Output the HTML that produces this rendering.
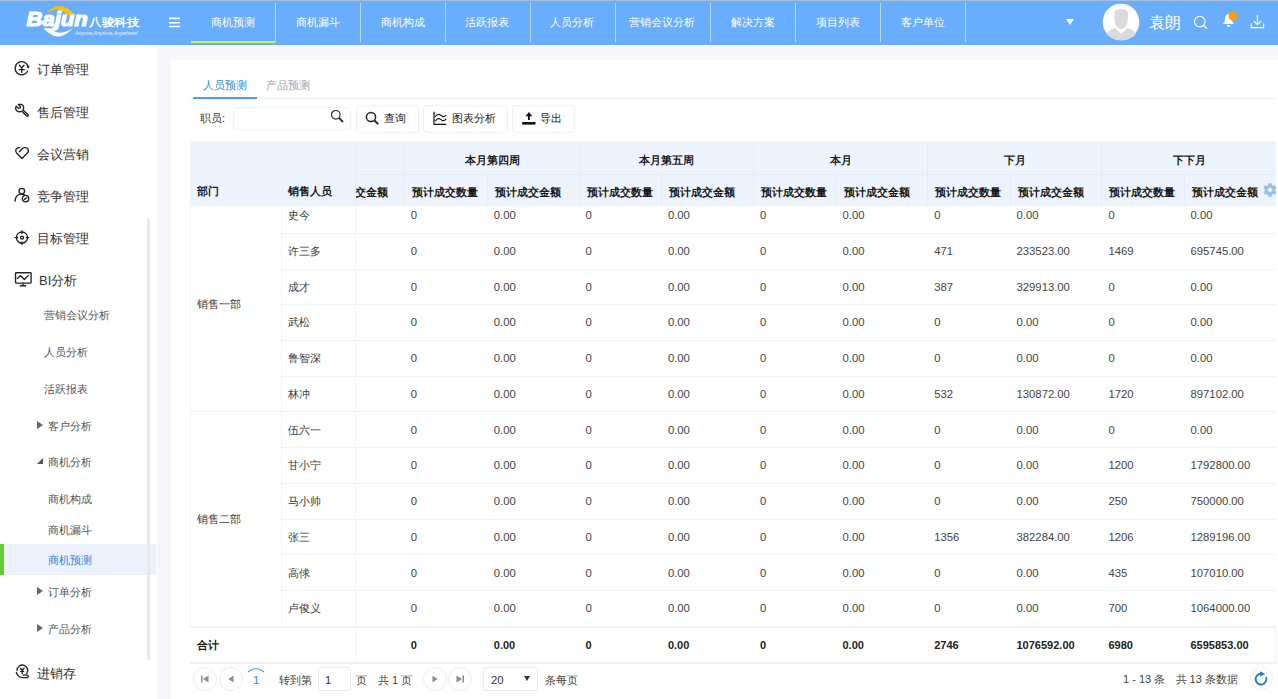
<!DOCTYPE html><html><head><meta charset="utf-8"><style>
*{box-sizing:border-box;margin:0;padding:0}
html,body{width:1278px;height:699px;overflow:hidden;background:#f5f7fb;font-family:"Liberation Sans",sans-serif;color:#333}
div,span{position:absolute;white-space:nowrap}
#top{left:0;top:0;width:1278px;height:45px;background:#69aefc;border-top:1px solid #a6bfdc}
.nav{top:1px;height:43px;color:#fff;font-size:11.2px;line-height:43px;text-align:center}
.sep{top:3px;width:1px;height:39px;background:#b9d7fa}
#side{left:0;top:45px;width:157px;height:654px;background:#fff}
.mi{font-size:13px;color:#333;line-height:16px}
.si{font-size:11.45px;color:#555;line-height:14px}
.tri{width:0;height:0;border-top:4px solid transparent;border-bottom:4px solid transparent;border-left:6px solid #666}
#panel{left:171px;top:60px;width:1107px;height:639px;background:#fff}
.btn{top:104.5px;height:28.3px;border:1px solid #efefef;border-radius:4px;background:#fff}
.bt{font-size:11px;color:#222;line-height:14px;top:110.7px}
.th{font-size:11px;font-weight:bold;color:#1a1a1a;line-height:14px}
.td{font-size:11px;color:#383838;line-height:14px}
.tf{font-size:11px;font-weight:bold;color:#222;line-height:14px}
.tn{font-size:11.3px;color:#444;line-height:14px}
.tfn{font-size:11px;font-weight:bold;color:#222;line-height:14px}
.hl{height:1px;background:#f3f3f3}
.vl{width:1px;background:#f4f4f4}
</style></head><body>
<div id="top"></div>
<svg style="position:absolute;left:0;top:0" width="160" height="44" viewBox="0 0 160 44">
<path d="M45.9 14 Q58.6 -2.4 75.2 15.1 L67.3 15 Q59.4 4.3 45.9 14 Z" fill="#f9c100"/>
<text x="26.6" y="26" font-family="Liberation Sans" font-weight="bold" font-style="italic" font-size="20.5" fill="#fff" stroke="#fff" stroke-width="1.2" textLength="61" lengthAdjust="spacingAndGlyphs">Bajun</text>
<path d="M43.7 28.3 Q57.8 44.5 72.7 28.6 Q58.2 37 51 28.3 Z" fill="#fff"/>
<text x="89" y="26" font-size="11" font-weight="bold" fill="#fff" textLength="50" lengthAdjust="spacingAndGlyphs">八骏科技</text>
<text x="75" y="35.3" font-family="Liberation Sans" font-style="italic" font-size="4.6" fill="#eaf3ff" textLength="63" lengthAdjust="spacingAndGlyphs">Anyone,Anytime,Anywhere!</text>
</svg>
<svg style="position:absolute;left:168px;top:15px" width="14" height="15" viewBox="0 0 14 15"><path d="M1 3.35 H12 M1 7.7 H12 M1 11.55 H12" stroke="#fff" stroke-width="1.6"/></svg>
<div class="nav" style="left:190px;width:85px">商机预测</div>
<div class="nav" style="left:275px;width:85.39999999999998px">商机漏斗</div>
<div class="nav" style="left:360.4px;width:84.60000000000002px">商机构成</div>
<div class="nav" style="left:445px;width:84.5px">活跃报表</div>
<div class="nav" style="left:529.5px;width:85.10000000000002px">人员分析</div>
<div class="nav" style="left:614.6px;width:95.39999999999998px">营销会议分析</div>
<div class="nav" style="left:710px;width:85.39999999999998px">解决方案</div>
<div class="nav" style="left:795.4px;width:84.60000000000002px">项目列表</div>
<div class="nav" style="left:880px;width:85px">客户单位</div>
<div class="sep" style="left:275px"></div>
<div class="sep" style="left:360.4px"></div>
<div class="sep" style="left:445px"></div>
<div class="sep" style="left:529.5px"></div>
<div class="sep" style="left:614.6px"></div>
<div class="sep" style="left:710px"></div>
<div class="sep" style="left:795.4px"></div>
<div class="sep" style="left:880px"></div>
<div class="sep" style="left:965px"></div>
<div style="left:191px;top:41.3px;width:84px;height:1.8px;background:#d2ef55"></div>
<div style="left:1066px;top:19px;width:0;height:0;border-left:4px solid transparent;border-right:4px solid transparent;border-top:6px solid #fff"></div>
<svg style="position:absolute;left:1102px;top:3px" width="38" height="38" viewBox="0 0 38 38">
<circle cx="19" cy="19" r="18.3" fill="#fff"/>
<path d="M12.4 11 Q12.4 6 19.2 6 Q26 6 26 11 L25.8 17.5 Q25.2 24.5 19.2 26.6 Q13.2 24.5 12.6 17.5 Z" fill="#dadadd"/>
<path d="M4.5 31 Q6.5 26.5 13 25 L19.2 31 L25.4 25 Q32 26.5 34 31 Q28 37.3 19.2 37.3 Q10.5 37.3 4.5 31 Z" fill="#dadadd"/>
</svg>
<div style="left:1149.3px;top:12.8px;font-size:16px;line-height:20px;color:#fff">袁朗</div>
<svg style="position:absolute;left:1193px;top:15px" width="16" height="15" viewBox="0 0 16 15">
<circle cx="6.8" cy="6.6" r="5.3" fill="none" stroke="#fff" stroke-width="1.15"/>
<line x1="10.6" y1="10.4" x2="14" y2="13.6" stroke="#fff" stroke-width="1.2"/>
</svg>
<svg style="position:absolute;left:1220px;top:10px" width="20" height="19" viewBox="0 0 20 19">
<path d="M3 14 Q5 12 5 9 Q5 5 8.5 4 Q12 5 12 9 Q12 12 14 14 Z" fill="#fff"/>
<path d="M7 15 H10.2 Q10.2 17 8.6 17 Q7 17 7 15 Z" fill="#fff"/>
<circle cx="13" cy="6" r="4.5" fill="#fc9f00"/>
</svg>
<svg style="position:absolute;left:1250px;top:14px" width="16" height="16" viewBox="0 0 16 16">
<path d="M1.2 9.5 V13.6 H13.6 V9.5" fill="none" stroke="#fff" stroke-width="1.1"/>
<line x1="7.4" y1="1" x2="7.4" y2="10.5" stroke="#fff" stroke-width="1.1"/>
<path d="M3.8 7 L7.4 10.6 L11 7" fill="none" stroke="#fff" stroke-width="1.1"/>
</svg>
<div id="side">
</div>
<div class="mi" style="left:37px;top:62.3px">订单管理</div>
<div class="mi" style="left:37px;top:104.6px">售后管理</div>
<div class="mi" style="left:37px;top:147.10000000000002px">会议营销</div>
<div class="mi" style="left:37px;top:188.8px">竞争管理</div>
<div class="mi" style="left:37px;top:231.3px">目标管理</div>
<div class="mi" style="left:39px;top:273.3px">BI分析</div>
<div class="mi" style="left:37px;top:666.0px">进销存</div>
<div style="left:0;top:544px;width:156px;height:31px;background:#ebf2fb"></div>
<div style="left:0;top:544px;width:4px;height:31px;background:#67cb33"></div>
<div class="si" style="left:44px;top:307.8px">营销会议分析</div>
<div class="si" style="left:44px;top:344.8px">人员分析</div>
<div class="si" style="left:44px;top:381.8px">活跃报表</div>
<div class="si" style="left:48px;top:418.8px">客户分析</div>
<div class="si" style="left:48px;top:454.8px">商机分析</div>
<div class="si" style="left:48px;top:491.8px">商机构成</div>
<div class="si" style="left:48px;top:522.8px">商机漏斗</div>
<div class="si" style="left:48px;top:584.8px">订单分析</div>
<div class="si" style="left:48px;top:621.8px">产品分析</div>
<div class="si" style="left:48px;top:553px;color:#2e86ee">商机预测</div>
<div class="tri" style="left:37px;top:421px"></div>
<div class="tri" style="left:37px;top:587px"></div>
<div class="tri" style="left:37px;top:624px"></div>
<div style="left:37px;top:458px;width:0;height:0;border-bottom:6px solid #555;border-left:6px solid transparent"></div>
<div style="left:147px;top:218px;width:3px;height:442px;border-radius:1.5px;background:#e9e9e9"></div>
<svg style="position:absolute;left:10px;top:56px" width="24" height="24" viewBox="0 0 24 24"><path d="M18.2 11.1 A6.6 6.6 0 1 0 17.6 15.2" stroke="#222" stroke-width="1.35" fill="none" stroke-linecap="round" stroke-linejoin="round"/><path d="M16.6 10.6 L19.6 9.6 L18.7 12.8 Z" fill="#222"/><path d="M9.4 9.3 L11.7 11.9 L14 9.3 M11.7 11.9 V16.4 M9.2 13.6 H14.2" stroke="#222" stroke-width="1.35" fill="none" stroke-linecap="round" stroke-linejoin="round" stroke-width="1.3"/></svg>
<svg style="position:absolute;left:10px;top:99px" width="24" height="24" viewBox="0 0 24 24"><path d="M8.3 5.3 H11 Q13.6 5.8 13.6 8.5 Q13.6 10 13 11 L18.3 16 Q18.6 17.3 17 17.2 L11.8 12.3 Q11 12.8 9 12.8 Q6 12.3 5.6 9.5 Q5.5 8 6.3 7.3 L8.5 9.3 Q10.6 9.5 10.4 7.8 Z" stroke="#222" stroke-width="1.35" fill="none" stroke-linecap="round" stroke-linejoin="round" stroke-width="1.3"/></svg>
<svg style="position:absolute;left:10px;top:142px" width="24" height="24" viewBox="0 0 24 24"><path d="M9.6 5.6 Q7 5.3 5.9 7.6 Q5.1 9.5 6.6 11.1 L12 16.5 L17.4 11.1 Q18.9 9.5 18.2 7.4 Q17 5.3 14.6 5.6 Q13.3 5.8 12.3 6.8 L9.3 9.8" stroke="#222" stroke-width="1.35" fill="none" stroke-linecap="round" stroke-linejoin="round"/></svg>
<svg style="position:absolute;left:10px;top:184px" width="24" height="24" viewBox="0 0 24 24"><circle cx="11.8" cy="7.1" r="2.8" stroke="#222" stroke-width="1.35" fill="none" stroke-linecap="round" stroke-linejoin="round"/><path d="M5 17.2 Q5.5 10.6 11 10.1 Q13 10 14.3 10.6" stroke="#222" stroke-width="1.35" fill="none" stroke-linecap="round" stroke-linejoin="round"/><circle cx="15.6" cy="14.6" r="3.2" stroke="#222" stroke-width="1.35" fill="none" stroke-linecap="round" stroke-linejoin="round"/><path d="M14.4 15.4 L16.9 13.8" stroke="#222" stroke-width="1.35" fill="none" stroke-linecap="round" stroke-linejoin="round" stroke-width="1.1"/></svg>
<svg style="position:absolute;left:10px;top:226px" width="24" height="24" viewBox="0 0 24 24"><circle cx="12" cy="11.6" r="5.6" stroke="#222" stroke-width="1.35" fill="none" stroke-linecap="round" stroke-linejoin="round"/><circle cx="12" cy="11.6" r="1.5" stroke="#222" stroke-width="1.35" fill="none" stroke-linecap="round" stroke-linejoin="round" stroke-width="1.25"/><path d="M12 4.8 V7.4 M12 15.8 V18.4 M5.2 11.6 H7.8 M16.2 11.6 H18.8" stroke="#222" stroke-width="1.35" fill="none" stroke-linecap="round" stroke-linejoin="round" stroke-width="1.9" stroke-linecap="butt"/></svg>
<svg style="position:absolute;left:10px;top:268px" width="26" height="24" viewBox="0 0 26 24"><rect x="5.5" y="4.7" width="15.6" height="10.4" rx="0.8" stroke="#222" stroke-width="1.35" fill="none" stroke-linecap="round" stroke-linejoin="round" stroke-width="1.4"/><path d="M7.3 10.6 L10.5 7.8 L14.4 11.5 L18.4 7.4" stroke="#222" stroke-width="1.35" fill="none" stroke-linecap="round" stroke-linejoin="round" stroke-width="1.3"/><path d="M13 15.5 V17.5 M10.3 17.7 H15.8" stroke="#222" stroke-width="1.35" fill="none" stroke-linecap="round" stroke-linejoin="round" stroke-width="1.3"/></svg>
<svg style="position:absolute;left:10px;top:660px" width="24" height="24" viewBox="0 0 24 24"><path d="M7 10.3 A5.4 5.4 0 1 1 16.8 13.6" stroke="#222" stroke-width="1.35" fill="none" stroke-linecap="round" stroke-linejoin="round"/><path d="M10.3 8.2 L12.2 10.3 L14 8.2 M12.2 10.3 V13.5 M10.7 11.3 H13.7" stroke="#222" stroke-width="1.35" fill="none" stroke-linecap="round" stroke-linejoin="round" stroke-width="1.25"/><path d="M6.4 12.4 Q7.5 16.8 12 17.6 H17.5 Q18.6 17 18 15.6 Q17 14.8 14.5 14.9 L13.2 15.1" stroke="#222" stroke-width="1.35" fill="none" stroke-linecap="round" stroke-linejoin="round"/></svg>
<div id="panel"></div>
<div style="left:203px;top:78px;font-size:11px;line-height:14px;color:#2d8dd6">人员预测</div>
<div style="left:266px;top:78px;font-size:11px;line-height:14px;color:#9aa5b5">产品预测</div>
<div style="left:190px;top:98px;width:1086px;height:1px;background:#eeeff2"></div>
<div style="left:193px;top:97px;width:64px;height:2px;background:#4f9df5"></div>
<div style="left:200px;top:111px;font-size:11.3px;line-height:14px;color:#333">职员:</div>
<div style="left:233px;top:107px;width:118px;height:23px;border:1px solid #f0f0f0;border-radius:4px"></div>
<svg style="position:absolute;left:330px;top:109px" width="15" height="15" viewBox="0 0 15 15">
<circle cx="5.8" cy="5.8" r="4.3" fill="none" stroke="#222" stroke-width="1.1"/>
<line x1="8.8" y1="8.8" x2="13" y2="13" stroke="#333" stroke-width="2"/>
</svg>
<div class="btn" style="left:356px;width:62.5px"></div>
<div class="bt" style="left:384px">查询</div>
<div class="btn" style="left:423px;width:85px"></div>
<div class="bt" style="left:451.5px">图表分析</div>
<div class="btn" style="left:512px;width:63px"></div>
<div class="bt" style="left:539.5px">导出</div>
<svg style="position:absolute;left:365px;top:111px" width="15" height="15" viewBox="0 0 15 15">
<circle cx="6" cy="6" r="4.6" fill="none" stroke="#222" stroke-width="1.5"/>
<line x1="9.3" y1="9.3" x2="13.2" y2="13.2" stroke="#222" stroke-width="1.9"/>
</svg>
<svg style="position:absolute;left:428px;top:106px" width="24" height="24" viewBox="0 0 24 24">
<path d="M6 5.8 V18.3 H18.3" fill="none" stroke="#1a1a1a" stroke-width="1.2"/>
<path d="M7.2 10.8 Q9 8 11.2 8.4 Q12.6 8.8 13.8 10 Q15.6 11.6 18.2 9.2" fill="none" stroke="#1a1a1a" stroke-width="1.15"/>
<path d="M7.2 15.2 Q9 12.2 11.2 12.6 Q12.6 13 13.8 14.2 Q15.6 15.8 18.2 12.6" fill="none" stroke="#1a1a1a" stroke-width="1.15"/>
</svg>
<svg style="position:absolute;left:516px;top:106px" width="24" height="24" viewBox="0 0 24 24">
<path d="M12.9 6 L16.3 10.3 H13.8 V13.9 H12 V10.3 H9.5 Z" fill="#111"/>
<rect x="6.2" y="16" width="13.3" height="2.6" fill="#111"/>
</svg>
<div style="left:190px;top:141px;width:1086px;height:65px;background:#eef4fe"></div>
<div class="hl" style="left:355px;top:174px;width:921px;background:#e6ecf6"></div>
<div class="vl" style="left:355px;top:141px;height:65px;background:#e6ecf6"></div>
<div class="vl" style="left:404px;top:141px;height:65px;background:#e6ecf6"></div>
<div class="vl" style="left:579px;top:141px;height:65px;background:#e6ecf6"></div>
<div class="vl" style="left:753px;top:141px;height:65px;background:#e6ecf6"></div>
<div class="vl" style="left:927px;top:141px;height:65px;background:#e6ecf6"></div>
<div class="vl" style="left:1101px;top:141px;height:65px;background:#e6ecf6"></div>
<div class="vl" style="left:487px;top:174px;height:32px;background:#e6ecf6"></div>
<div class="vl" style="left:661px;top:174px;height:32px;background:#e6ecf6"></div>
<div class="vl" style="left:836px;top:174px;height:32px;background:#e6ecf6"></div>
<div class="vl" style="left:1010px;top:174px;height:32px;background:#e6ecf6"></div>
<div class="vl" style="left:1184px;top:174px;height:32px;background:#e6ecf6"></div>
<div class="th" style="left:404.7px;width:174.8px;text-align:center;top:152.6px">本月第四周</div>
<div class="th" style="left:579.5px;width:174.5px;text-align:center;top:152.6px">本月第五周</div>
<div class="th" style="left:754.0px;width:174.20000000000005px;text-align:center;top:152.6px">本月</div>
<div class="th" style="left:928.2px;width:174.20000000000005px;text-align:center;top:152.6px">下月</div>
<div class="th" style="left:1102.4px;width:174.0999999999999px;text-align:center;top:152.6px">下下月</div>
<div class="th" style="left:197px;top:184px">部门</div>
<div class="th" style="left:288px;top:184px">销售人员</div>
<div style="left:355.5px;top:184.5px;width:48px;height:16px;overflow:hidden"><div class="th" style="left:-33.3px;top:0">预计成交金额</div></div>
<div class="th" style="left:411.7px;top:184.6px">预计成交数量</div>
<div class="th" style="left:494.8px;top:184.6px">预计成交金额</div>
<div class="th" style="left:586.5px;top:184.6px">预计成交数量</div>
<div class="th" style="left:668.9px;top:184.6px">预计成交金额</div>
<div class="th" style="left:761.0px;top:184.6px">预计成交数量</div>
<div class="th" style="left:843.5px;top:184.6px">预计成交金额</div>
<div class="th" style="left:935.2px;top:184.6px">预计成交数量</div>
<div class="th" style="left:1017.5px;top:184.6px">预计成交金额</div>
<div class="th" style="left:1109.4px;top:184.6px">预计成交数量</div>
<div class="th" style="left:1191.5px;top:184.6px">预计成交金额</div>
<svg style="position:absolute;left:1261.6px;top:182.2px" width="16" height="16" viewBox="0 0 16 16">
<path fill="#94bfe8" fill-rule="evenodd" stroke="#94bfe8" stroke-width="0.6" stroke-linejoin="round" d="M5.55 3.76 L6.40 3.37 L6.54 1.67 L9.46 1.67 L9.60 3.37 L10.45 3.76 L11.21 4.30 L12.75 3.57 L14.22 6.10 L12.81 7.07 L12.90 8.00 L12.81 8.93 L14.22 9.90 L12.75 12.43 L11.21 11.70 L10.45 12.24 L9.60 12.63 L9.46 14.33 L6.54 14.33 L6.40 12.63 L5.55 12.24 L4.79 11.70 L3.25 12.43 L1.78 9.90 L3.19 8.93 L3.10 8.00 L3.19 7.07 L1.78 6.10 L3.25 3.57 L4.79 4.30 Z M10.5 8 A2.5 2.5 0 1 0 5.5 8 A2.5 2.5 0 1 0 10.5 8 Z"/>
</svg>
<div class="td" style="left:288px;top:208.0px">史今</div>
<div class="tn" style="left:410.7px;top:208.2px">0</div>
<div class="tn" style="left:493.8px;top:208.2px">0.00</div>
<div class="tn" style="left:585.5px;top:208.2px">0</div>
<div class="tn" style="left:667.9px;top:208.2px">0.00</div>
<div class="tn" style="left:760.0px;top:208.2px">0</div>
<div class="tn" style="left:842.5px;top:208.2px">0.00</div>
<div class="tn" style="left:934.2px;top:208.2px">0</div>
<div class="tn" style="left:1016.5px;top:208.2px">0.00</div>
<div class="tn" style="left:1108.4px;top:208.2px">0</div>
<div class="tn" style="left:1190.5px;top:208.2px">0.00</div>
<div class="hl" style="left:282px;top:233px;width:994px"></div>
<div class="td" style="left:288px;top:243.7px">许三多</div>
<div class="tn" style="left:410.7px;top:243.9px">0</div>
<div class="tn" style="left:493.8px;top:243.9px">0.00</div>
<div class="tn" style="left:585.5px;top:243.9px">0</div>
<div class="tn" style="left:667.9px;top:243.9px">0.00</div>
<div class="tn" style="left:760.0px;top:243.9px">0</div>
<div class="tn" style="left:842.5px;top:243.9px">0.00</div>
<div class="tn" style="left:934.2px;top:243.9px">471</div>
<div class="tn" style="left:1016.5px;top:243.9px">233523.00</div>
<div class="tn" style="left:1108.4px;top:243.9px">1469</div>
<div class="tn" style="left:1190.5px;top:243.9px">695745.00</div>
<div class="hl" style="left:282px;top:269px;width:994px"></div>
<div class="td" style="left:288px;top:279.5px">成才</div>
<div class="tn" style="left:410.7px;top:279.7px">0</div>
<div class="tn" style="left:493.8px;top:279.7px">0.00</div>
<div class="tn" style="left:585.5px;top:279.7px">0</div>
<div class="tn" style="left:667.9px;top:279.7px">0.00</div>
<div class="tn" style="left:760.0px;top:279.7px">0</div>
<div class="tn" style="left:842.5px;top:279.7px">0.00</div>
<div class="tn" style="left:934.2px;top:279.7px">387</div>
<div class="tn" style="left:1016.5px;top:279.7px">329913.00</div>
<div class="tn" style="left:1108.4px;top:279.7px">0</div>
<div class="tn" style="left:1190.5px;top:279.7px">0.00</div>
<div class="hl" style="left:282px;top:304px;width:994px"></div>
<div class="td" style="left:288px;top:315.2px">武松</div>
<div class="tn" style="left:410.7px;top:315.4px">0</div>
<div class="tn" style="left:493.8px;top:315.4px">0.00</div>
<div class="tn" style="left:585.5px;top:315.4px">0</div>
<div class="tn" style="left:667.9px;top:315.4px">0.00</div>
<div class="tn" style="left:760.0px;top:315.4px">0</div>
<div class="tn" style="left:842.5px;top:315.4px">0.00</div>
<div class="tn" style="left:934.2px;top:315.4px">0</div>
<div class="tn" style="left:1016.5px;top:315.4px">0.00</div>
<div class="tn" style="left:1108.4px;top:315.4px">0</div>
<div class="tn" style="left:1190.5px;top:315.4px">0.00</div>
<div class="hl" style="left:282px;top:340px;width:994px"></div>
<div class="td" style="left:288px;top:351.0px">鲁智深</div>
<div class="tn" style="left:410.7px;top:351.2px">0</div>
<div class="tn" style="left:493.8px;top:351.2px">0.00</div>
<div class="tn" style="left:585.5px;top:351.2px">0</div>
<div class="tn" style="left:667.9px;top:351.2px">0.00</div>
<div class="tn" style="left:760.0px;top:351.2px">0</div>
<div class="tn" style="left:842.5px;top:351.2px">0.00</div>
<div class="tn" style="left:934.2px;top:351.2px">0</div>
<div class="tn" style="left:1016.5px;top:351.2px">0.00</div>
<div class="tn" style="left:1108.4px;top:351.2px">0</div>
<div class="tn" style="left:1190.5px;top:351.2px">0.00</div>
<div class="hl" style="left:282px;top:376px;width:994px"></div>
<div class="td" style="left:288px;top:386.7px">林冲</div>
<div class="tn" style="left:410.7px;top:386.9px">0</div>
<div class="tn" style="left:493.8px;top:386.9px">0.00</div>
<div class="tn" style="left:585.5px;top:386.9px">0</div>
<div class="tn" style="left:667.9px;top:386.9px">0.00</div>
<div class="tn" style="left:760.0px;top:386.9px">0</div>
<div class="tn" style="left:842.5px;top:386.9px">0.00</div>
<div class="tn" style="left:934.2px;top:386.9px">532</div>
<div class="tn" style="left:1016.5px;top:386.9px">130872.00</div>
<div class="tn" style="left:1108.4px;top:386.9px">1720</div>
<div class="tn" style="left:1190.5px;top:386.9px">897102.00</div>
<div class="hl" style="left:190px;top:411px;width:1086px"></div>
<div class="td" style="left:288px;top:422.5px">伍六一</div>
<div class="tn" style="left:410.7px;top:422.7px">0</div>
<div class="tn" style="left:493.8px;top:422.7px">0.00</div>
<div class="tn" style="left:585.5px;top:422.7px">0</div>
<div class="tn" style="left:667.9px;top:422.7px">0.00</div>
<div class="tn" style="left:760.0px;top:422.7px">0</div>
<div class="tn" style="left:842.5px;top:422.7px">0.00</div>
<div class="tn" style="left:934.2px;top:422.7px">0</div>
<div class="tn" style="left:1016.5px;top:422.7px">0.00</div>
<div class="tn" style="left:1108.4px;top:422.7px">0</div>
<div class="tn" style="left:1190.5px;top:422.7px">0.00</div>
<div class="hl" style="left:282px;top:447px;width:994px"></div>
<div class="td" style="left:288px;top:458.2px">甘小宁</div>
<div class="tn" style="left:410.7px;top:458.4px">0</div>
<div class="tn" style="left:493.8px;top:458.4px">0.00</div>
<div class="tn" style="left:585.5px;top:458.4px">0</div>
<div class="tn" style="left:667.9px;top:458.4px">0.00</div>
<div class="tn" style="left:760.0px;top:458.4px">0</div>
<div class="tn" style="left:842.5px;top:458.4px">0.00</div>
<div class="tn" style="left:934.2px;top:458.4px">0</div>
<div class="tn" style="left:1016.5px;top:458.4px">0.00</div>
<div class="tn" style="left:1108.4px;top:458.4px">1200</div>
<div class="tn" style="left:1190.5px;top:458.4px">1792800.00</div>
<div class="hl" style="left:282px;top:483px;width:994px"></div>
<div class="td" style="left:288px;top:494.0px">马小帅</div>
<div class="tn" style="left:410.7px;top:494.2px">0</div>
<div class="tn" style="left:493.8px;top:494.2px">0.00</div>
<div class="tn" style="left:585.5px;top:494.2px">0</div>
<div class="tn" style="left:667.9px;top:494.2px">0.00</div>
<div class="tn" style="left:760.0px;top:494.2px">0</div>
<div class="tn" style="left:842.5px;top:494.2px">0.00</div>
<div class="tn" style="left:934.2px;top:494.2px">0</div>
<div class="tn" style="left:1016.5px;top:494.2px">0.00</div>
<div class="tn" style="left:1108.4px;top:494.2px">250</div>
<div class="tn" style="left:1190.5px;top:494.2px">750000.00</div>
<div class="hl" style="left:282px;top:519px;width:994px"></div>
<div class="td" style="left:288px;top:529.7px">张三</div>
<div class="tn" style="left:410.7px;top:529.9px">0</div>
<div class="tn" style="left:493.8px;top:529.9px">0.00</div>
<div class="tn" style="left:585.5px;top:529.9px">0</div>
<div class="tn" style="left:667.9px;top:529.9px">0.00</div>
<div class="tn" style="left:760.0px;top:529.9px">0</div>
<div class="tn" style="left:842.5px;top:529.9px">0.00</div>
<div class="tn" style="left:934.2px;top:529.9px">1356</div>
<div class="tn" style="left:1016.5px;top:529.9px">382284.00</div>
<div class="tn" style="left:1108.4px;top:529.9px">1206</div>
<div class="tn" style="left:1190.5px;top:529.9px">1289196.00</div>
<div class="hl" style="left:282px;top:554px;width:994px"></div>
<div class="td" style="left:288px;top:565.5px">高俅</div>
<div class="tn" style="left:410.7px;top:565.7px">0</div>
<div class="tn" style="left:493.8px;top:565.7px">0.00</div>
<div class="tn" style="left:585.5px;top:565.7px">0</div>
<div class="tn" style="left:667.9px;top:565.7px">0.00</div>
<div class="tn" style="left:760.0px;top:565.7px">0</div>
<div class="tn" style="left:842.5px;top:565.7px">0.00</div>
<div class="tn" style="left:934.2px;top:565.7px">0</div>
<div class="tn" style="left:1016.5px;top:565.7px">0.00</div>
<div class="tn" style="left:1108.4px;top:565.7px">435</div>
<div class="tn" style="left:1190.5px;top:565.7px">107010.00</div>
<div class="hl" style="left:282px;top:590px;width:994px"></div>
<div class="td" style="left:288px;top:601.2px">卢俊义</div>
<div class="tn" style="left:410.7px;top:601.4px">0</div>
<div class="tn" style="left:493.8px;top:601.4px">0.00</div>
<div class="tn" style="left:585.5px;top:601.4px">0</div>
<div class="tn" style="left:667.9px;top:601.4px">0.00</div>
<div class="tn" style="left:760.0px;top:601.4px">0</div>
<div class="tn" style="left:842.5px;top:601.4px">0.00</div>
<div class="tn" style="left:934.2px;top:601.4px">0</div>
<div class="tn" style="left:1016.5px;top:601.4px">0.00</div>
<div class="tn" style="left:1108.4px;top:601.4px">700</div>
<div class="tn" style="left:1190.5px;top:601.4px">1064000.00</div>
<div class="vl" style="left:281px;top:206px;height:420.5px"></div>
<div class="vl" style="left:355px;top:206px;height:457px"></div>
<div class="vl" style="left:190px;top:206px;height:420px"></div>
<div class="td" style="left:197px;top:296.9px">销售一部</div>
<div class="td" style="left:197px;top:511.8px">销售二部</div>
<div class="hl" style="left:190px;top:626px;width:1086px;height:2px;background:#f0f0f0"></div>
<div class="hl" style="left:190px;top:662px;width:1086px;height:2px;background:#f0f0f0"></div>
<div class="tf" style="left:197px;top:637.6px">合计</div>
<div class="vl" style="left:1275px;top:626px;height:38px;background:#f0f0f0"></div>
<div class="tfn" style="left:410.7px;top:638px">0</div>
<div class="tfn" style="left:493.8px;top:638px">0.00</div>
<div class="tfn" style="left:585.5px;top:638px">0</div>
<div class="tfn" style="left:667.9px;top:638px">0.00</div>
<div class="tfn" style="left:760.0px;top:638px">0</div>
<div class="tfn" style="left:842.5px;top:638px">0.00</div>
<div class="tfn" style="left:934.2px;top:638px">2746</div>
<div class="tfn" style="left:1016.5px;top:638px">1076592.00</div>
<div class="tfn" style="left:1108.4px;top:638px">6980</div>
<div class="tfn" style="left:1190.5px;top:638px">6595853.00</div>
<div style="left:193px;top:667px;width:24px;height:24px;border:1px solid #ededed;border-radius:50%"></div>
<svg style="position:absolute;left:199px;top:673px" width="12" height="12" viewBox="0 0 12 12"><rect x="2" y="2.5" width="1.5" height="7" fill="#8c8c8c"/><path d="M9.5 2.5 V9.5 L4 6 Z" fill="#8c8c8c"/></svg>
<div style="left:219px;top:667px;width:24px;height:24px;border:1px solid #ededed;border-radius:50%"></div>
<svg style="position:absolute;left:225px;top:673px" width="12" height="12" viewBox="0 0 12 12"><path d="M8.5 2.5 V9.5 L3.5 6 Z" fill="#8c8c8c"/></svg>
<div style="left:423px;top:667px;width:24px;height:24px;border:1px solid #ededed;border-radius:50%"></div>
<svg style="position:absolute;left:429px;top:673px" width="12" height="12" viewBox="0 0 12 12"><path d="M3.5 2.5 V9.5 L8.5 6 Z" fill="#8c8c8c"/></svg>
<div style="left:448px;top:667px;width:24px;height:24px;border:1px solid #ededed;border-radius:50%"></div>
<svg style="position:absolute;left:454px;top:673px" width="12" height="12" viewBox="0 0 12 12"><path d="M2.5 2.5 V9.5 L8 6 Z" fill="#8c8c8c"/><rect x="8.5" y="2.5" width="1.5" height="7" fill="#8c8c8c"/></svg>
<svg style="position:absolute;left:246px;top:666px" width="20" height="8" viewBox="0 0 20 8"><path d="M2 6 Q10 -1 18 6" fill="none" stroke="#3a95e0" stroke-width="1.1"/></svg>
<div style="left:253px;top:672.5px;font-size:11.3px;line-height:14px;color:#2d8dd6">1</div>
<div style="left:279px;top:672.5px;font-size:11px;line-height:14px;color:#444">转到第</div>
<div style="left:318px;top:667px;width:33px;height:23.5px;border:1px solid #ebebeb;border-radius:3px"></div>
<div style="left:325px;top:672.5px;font-size:11.3px;line-height:14px;color:#333">1</div>
<div style="left:356px;top:672.5px;font-size:11px;line-height:14px;color:#444">页</div>
<div style="left:378px;top:672.5px;font-size:11px;line-height:14px;color:#444">共 1 页</div>
<div style="left:483px;top:667px;width:55px;height:23.5px;border:1px solid #ebebeb;border-radius:3px"></div>
<div style="left:491px;top:672.5px;font-size:11.3px;line-height:14px;color:#333">20</div>
<div style="left:523.5px;top:676px;width:0;height:0;border-left:3.5px solid transparent;border-right:3.5px solid transparent;border-top:5.5px solid #333"></div>
<div style="left:544.5px;top:672.5px;font-size:11px;line-height:14px;color:#444">条每页</div>
<div style="left:1123px;top:672px;font-size:11px;line-height:14px;color:#444">1 - 13 条</div>
<div style="left:1175.5px;top:672px;font-size:11px;line-height:14px;color:#444">共 13 条数据</div>
<div style="left:1249.5px;top:667.2px;width:23px;height:23px;border:1px solid #f0f0f0;border-radius:50%"></div>
<svg style="position:absolute;left:1249px;top:667px" width="24" height="24" viewBox="0 0 24 24"><path d="M17.1 10.2 A5.4 5.4 0 1 1 11.6 6.7" fill="none" stroke="#1b7fd4" stroke-width="1.9"/><path d="M11 4.2 L16.3 6.9 L11 9.6 Z" fill="#1b7fd4"/></svg>
</body></html>
